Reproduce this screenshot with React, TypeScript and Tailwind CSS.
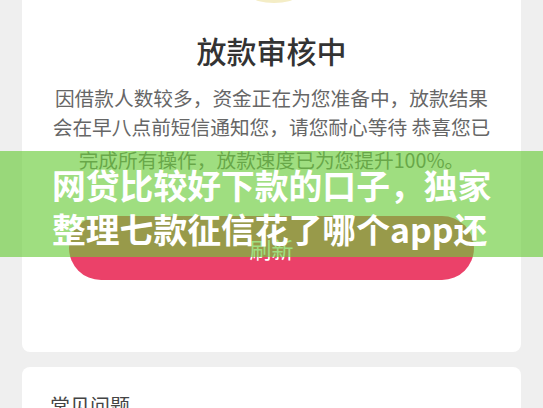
import React from "react";

export default function App() {
  const font = { fontFamily: '"Noto Sans CJK SC", "Noto Sans", sans-serif' };
  return (
    <div
      className="relative w-[543px] h-[408px] overflow-hidden bg-[#efefef]"
      style={font}
    >
      {/* main card */}
      <div className="mx-[22px] bg-white rounded-b-[8px] flex flex-col items-center pb-[72px]">
        <svg width="60" height="4" viewBox="0 0 60 4" className="block">
          <ellipse cx="32" cy="-3" rx="21" ry="6" fill="#f4edc6" />
        </svg>
        <div className="mt-[26px] text-[30px] leading-[40px] font-medium text-[#333333]">
          放款审核中
        </div>
        <div className="mt-[13px] flex flex-col items-center text-[19.7px] text-[#666666] whitespace-nowrap">
          <div className="leading-[29px]">因借款人数较多，资金正在为您准备中，放款结果</div>
          <div className="leading-[29px]">会在早八点前短信通知您，请您耐心等待 恭喜您已</div>
          <div className="leading-[29px] mt-[4px]">完成所有操作，放款速度已为您提升100%。</div>
        </div>
        <div className="mt-[42px] self-stretch mx-[47px] h-[64px] rounded-full bg-[#eb4169] flex items-center justify-center">
          <span className="text-[22px] leading-[28px] text-white -mt-[1px]">刷新</span>
        </div>
      </div>

      {/* second card */}
      <div className="mx-[22px] mt-[15px] bg-white rounded-[8px] pt-[25px] pl-[28px] pr-[24px] flex items-start justify-between h-[80px]">
        <span className="text-[20px] leading-[28px] text-[#444444]">常见问题</span>
        <svg width="12" height="20" viewBox="0 0 12 20" className="mt-[15px]">
          <path d="M2 2 L10 10 L2 18" stroke="#c8c8c8" strokeWidth="2" fill="none" />
        </svg>
      </div>

      {/* green watermark banner */}
      <div className="absolute left-0 top-[151px] w-[543px] h-[106px] overflow-hidden bg-[rgba(105,204,58,0.645)]">
        <div className="pl-[52px] pt-[12px] w-[500px] text-[33.8px] leading-[44px] font-bold text-white">
          网贷比较好下款的口子，独家整理七款征信花了哪个app还能借钱
        </div>
      </div>
    </div>
  );
}
